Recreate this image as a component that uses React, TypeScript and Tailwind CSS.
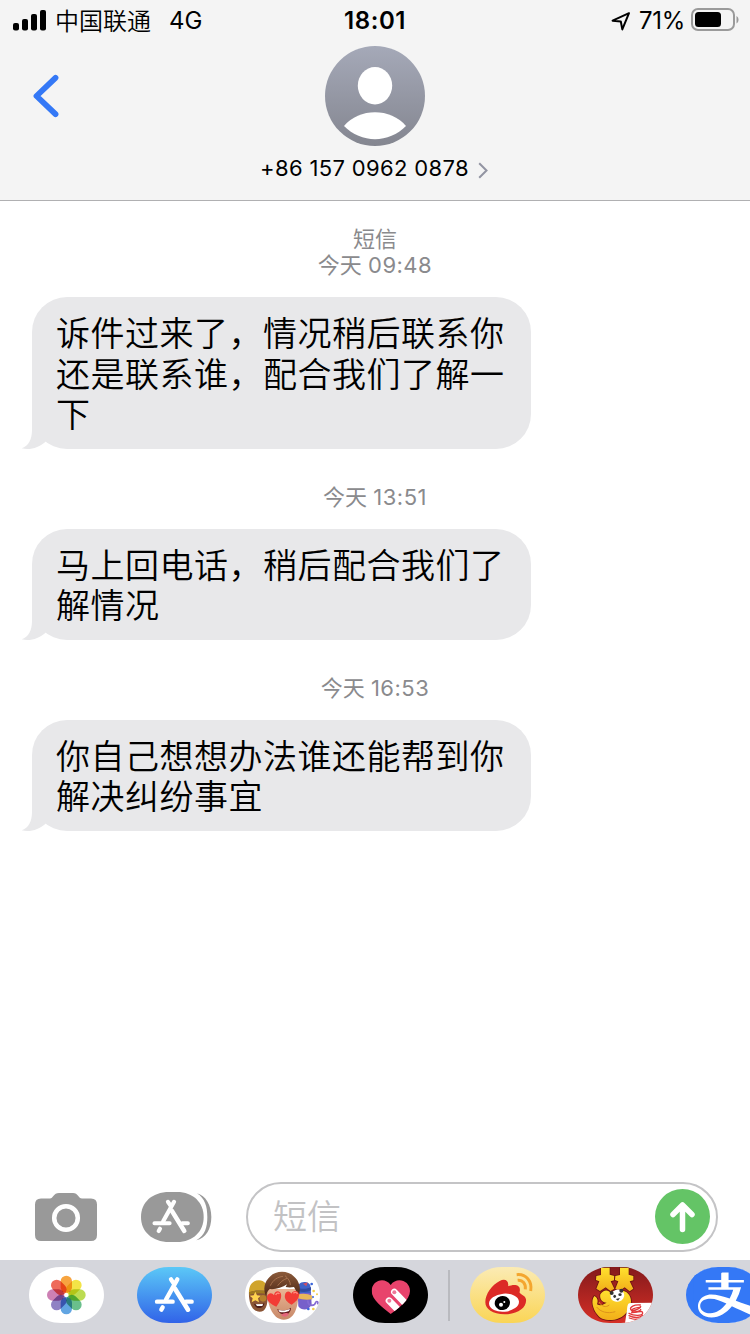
import type { ReactNode } from "react";
import { SiAlipay } from "react-icons/si";

const PILL =
  "M96 0H129C186 0 225 38 225 84S186 168 129 168H96C39 168 0 130 0 84S39 0 96 0Z";

const threads = [
  {
    service: "短信",
    time: "09:48",
    lines: ["诉件过来了，情况稍后联系你", "还是联系谁，配合我们了解一", "下"],
  },
  {
    time: "13:51",
    lines: ["马上回电话，稍后配合我们了", "解情况"],
  },
  {
    time: "16:53",
    lines: ["你自己想想办法谁还能帮到你", "解决纠纷事宜"],
  },
];

const petals = [
  "#f7a440",
  "#f3e447",
  "#bcdc52",
  "#6abf8c",
  "#62a5e2",
  "#9082c4",
  "#cd80b4",
  "#ee6b5b",
];

function StatusBar() {
  return (
    <div className="grid h-10 grid-cols-3 items-center pt-[2px] text-[24px] leading-none">
      <div className="flex items-center pl-[13px]">
        <svg width="34" height="22" viewBox="0 0 34 22" className="-mt-[3px] shrink-0">
          <rect x="0" y="14" width="6" height="7.5" rx="2" />
          <rect x="9" y="10" width="6" height="11.5" rx="2" />
          <rect x="18" y="5" width="6" height="16.5" rx="2" />
          <rect x="27" y="1" width="6" height="20.5" rx="2" />
        </svg>
        <span className="ml-2 mt-px whitespace-nowrap font-[350]">中国联通</span>
        <span className="ml-[18px]">4G</span>
      </div>
      <div className="text-center font-semibold tracking-[0.6px]">18:01</div>
      <div className="flex items-center justify-end pr-[11px]">
        <svg width="20" height="20" viewBox="0 0 20 20" className="-mt-px mr-[8px]">
          <path
            d="M18 2.2L1.6 9.7L9.8 10.5L11.3 18.4Z"
            fill="none"
            stroke="#000"
            strokeWidth="2"
            strokeLinejoin="round"
          />
        </svg>
        <span className="tracking-[-0.3px]">71%</span>
        <svg width="48" height="23" viewBox="0 0 48 23" className="-mt-[3px] ml-[6px]">
          <rect x="1" y="1" width="42" height="21" rx="6" fill="none" stroke="#9a9a9a" strokeWidth="2" />
          <rect x="4" y="4" width="26" height="15" rx="3.5" />
          <path d="M45.5 8V15.5C48.2 14 48.2 9.5 45.5 8Z" fill="#9a9a9a" />
        </svg>
      </div>
    </div>
  );
}

function Header() {
  return (
    <header className="h-[201px] border-b border-[#b0b0b2] bg-[#f4f4f4]">
      <StatusBar />
      <div className="grid grid-cols-3 pt-[6px]">
        <div className="flex h-[100px] items-center pl-[33px]">
          <svg width="27" height="44" viewBox="0 0 27 44" fill="none">
            <path
              d="M22.5 3.8L3.5 22L22.5 40.2"
              stroke="#3478f6"
              strokeWidth="5.8"
              strokeLinecap="round"
              strokeLinejoin="round"
            />
          </svg>
        </div>
        <svg width="100" height="100" viewBox="0 0 100 100" className="mx-auto">
          <defs>
            <linearGradient id="avatar" x1="0" y1="0" x2="0" y2="1">
              <stop offset="0" stopColor="#a5a9b8" />
              <stop offset="1" stopColor="#848690" />
            </linearGradient>
          </defs>
          <circle cx="50" cy="50" r="50" fill="url(#avatar)" />
          <ellipse cx="50" cy="39.7" rx="17.2" ry="18.7" fill="#fff" />
          <path d="M19 80C34 61.5 66 61.5 81 80C64 97.5 36 97.5 19 80Z" fill="#fff" />
        </svg>
      </div>
      <div className="mt-[10px] flex items-center justify-center pr-[2px]">
        <span className="text-[22px] leading-6 tracking-[0.35px]">+86 157 0962 0878</span>
        <svg width="10" height="17" viewBox="0 0 10 17" fill="none" className="ml-[9px] mt-[4px]">
          <path d="M1.2 1.2L8.5 8.5L1.2 15.8" stroke="#9294a2" strokeWidth="2" />
        </svg>
      </div>
    </header>
  );
}

function Bubble({ lines }: { lines: string[] }) {
  return (
    <div className="relative ml-8 w-[499px] rounded-[35px] bg-[#e8e8ea] pb-[13px] pl-6 pt-[17px] text-[34px] font-[350] leading-[40.5px] tracking-[0.5px]">
      {lines.map((line) => (
        <p key={line} className="whitespace-nowrap">
          {line}
        </p>
      ))}
      <svg
        className="absolute -bottom-px -left-3"
        width="30"
        height="49"
        viewBox="60 363 90 147"
        fill="#e8e8ea"
      >
        <path d="M96 368V450C96 478 86 498 65 505C92 511 117 502 137 485L150 450V368Z" />
      </svg>
    </div>
  );
}

function AppGlyph() {
  return (
    <g fill="none" stroke="#fff" strokeLinecap="round" strokeWidth="13">
      <path d="M102 37L110 49" />
      <path d="M121 37L87 98" />
      <path d="M60 104H107M147 104H164" />
      <path d="M114 65L153 128" strokeWidth="14" />
      <path d="M77 121L73 128" />
    </g>
  );
}

function Pill({ id, fill, children }: { id: string; fill: string; children?: ReactNode }) {
  return (
    <svg width="75" height="56" viewBox="0 0 225 168" className="shrink-0">
      <clipPath id={id}>
        <path d={PILL} />
      </clipPath>
      <g clipPath={`url(#${id})`}>
        <rect width="225" height="168" fill={fill} />
        {children}
      </g>
    </svg>
  );
}

function PhotosIcon() {
  return (
    <Pill id="photos" fill="#fff">
      <g transform="translate(112 84)">
        {petals.map((color, i) => (
          <rect
            key={color}
            x="-17"
            y="-58"
            width="34"
            height="52"
            rx="17"
            fill={color}
            transform={`rotate(${i * 45})`}
            className="mix-blend-multiply"
          />
        ))}
      </g>
    </Pill>
  );
}

function StoreIcon() {
  return (
    <Pill id="store" fill="url(#store-bg)">
      <defs>
        <linearGradient id="store-bg" x1="0" y1="0" x2="0" y2="1">
          <stop offset="0" stopColor="#5bc8f7" />
          <stop offset="1" stopColor="#3163e8" />
        </linearGradient>
      </defs>
      <AppGlyph />
    </Pill>
  );
}

function MemojiIcon() {
  return (
    <Pill id="memoji" fill="#fff">
      <defs>
        <linearGradient id="hair" x1="0" y1="0" x2="0" y2="1">
          <stop offset="0" stopColor="#8c5b3b" />
          <stop offset="1" stopColor="#4e2817" />
        </linearGradient>
        <linearGradient id="skin" x1="0" y1="0" x2="0" y2="1">
          <stop offset="0" stopColor="#eab594" />
          <stop offset="1" stopColor="#c78868" />
        </linearGradient>
      </defs>
      {/* left: beanie and star eyes */}
      <path d="M12 70C10 106 20 134 44 134C64 134 70 110 68 70Z" fill="#8a5435" />
      <path d="M12 76C12 52 24 40 42 40C58 40 68 52 70 74C48 68 30 68 12 76Z" fill="#d0a42c" />
      <path d="M12 76C30 68 50 68 70 74V82C50 77 30 78 13 84Z" fill="#a17a20" />
      <path d="M27 110C38 114 50 114 58 108C57 126 34 130 27 110Z" fill="#4c1d19" />
      <path d="M32 112L54 111L52 117H36Z" fill="#fff" />
      <path
        d="M31 74L36 85L48 86L39 94L42 106L31 100L20 106L23 94L14 86L26 85Z"
        fill="#ffd34f"
      />
      <circle cx="54" cy="94" r="10" fill="#b6802d" />
      {/* right: wizard */}
      <path d="M162 52C170 40 194 44 196 56L198 78H160Z" fill="#3f62c8" />
      <path d="M160 62C174 68 188 66 198 60V70C186 76 172 76 160 72Z" fill="#304aa2" />
      <path d="M174 50L188 46L184 58Z" fill="#d04d63" />
      <path d="M158 78H198L200 112C192 132 170 132 160 118Z" fill="#7760ca" />
      <path d="M158 82C174 78 190 80 202 86V97C186 100 170 98 158 94Z" fill="#e8b75b" />
      <path
        d="M188 100C190 122 210 116 212 106C216 100 222 106 217 112"
        fill="none"
        stroke="#856bd2"
        strokeWidth="5"
      />
      <g fill="#3c66db">
        <circle cx="200" cy="51" r="4" />
        <circle cx="190" cy="126" r="4" />
        <circle cx="204" cy="90" r="3" />
      </g>
      <g fill="#f4cf4c">
        <circle cx="206" cy="72" r="4" />
        <circle cx="205" cy="126" r="4" />
        <circle cx="216" cy="82" r="3" />
      </g>
      {/* centre: heart eyes */}
      <path d="M67 66C64 104 80 158 116 158C152 158 162 112 160 66Z" fill="url(#skin)" />
      <path
        d="M63 86C54 70 57 44 76 28C92 10 130 10 146 28C164 42 168 66 162 84C156 78 152 70 147 60C138 62 130 62 122 60L126 52C112 62 90 68 74 66C68 72 65 78 63 86Z"
        fill="url(#hair)"
      />
      <path
        d="M76 56C84 38 98 30 114 28M98 56C106 46 114 38 126 34M136 54C136 44 130 34 120 26"
        fill="none"
        stroke="#a87350"
        strokeWidth="3"
      />
      <path d="M96 127C110 132 128 130 138 122C138 144 110 154 96 127Z" fill="#671e20" />
      <path d="M100 129C112 132 126 130 135 125L132 132C120 137 110 137 103 134Z" fill="#fff" />
      <path d="M108 144C116 136 128 136 132 142C126 150 116 152 108 144Z" fill="#e5657b" />
      <path
        d="M94 119C78 112 64 101 66 89C68 77 82 75 87 85C88 71 104 68 108 81C111 94 102 108 94 119Z"
        fill="#f23c35"
      />
      <path
        d="M140 113C126 106 117 95 120 83C123 71 134 70 139 80C144 68 161 70 162 82C163 97 150 106 140 113Z"
        fill="#f23c35"
      />
      <path d="M92 84C95 77 101 77 103 81M145 79C150 74 156 76 157 81" stroke="#ff8a7d" strokeWidth="4" fill="none" />
    </Pill>
  );
}

function TouchIcon() {
  return (
    <Pill id="touch" fill="#000">
      <clipPath id="heart">
        <path d="M113 141C90 122 56 99 56 72C56 40 95 28 113 54C131 28 171 40 171 72C171 99 137 124 113 141Z" />
      </clipPath>
      <g clipPath="url(#heart)">
        <rect width="225" height="168" fill="#e8436c" />
        <g stroke="#fff" strokeLinecap="round" strokeWidth="20">
          <path d="M124 75L170 123" />
          <path d="M108 101L152 146" />
        </g>
        <path d="M116 89L158 132" stroke="#e8436c" strokeWidth="3" />
      </g>
      <circle cx="124" cy="76" r="6" fill="#ee7898" />
      <circle cx="109" cy="101" r="6" fill="#ee7898" />
    </Pill>
  );
}

function WeiboIcon() {
  return (
    <Pill id="weibo" fill="url(#weibo-bg)">
      <defs>
        <linearGradient id="weibo-bg" x1="0" y1="0" x2="0" y2="1">
          <stop offset="0" stopColor="#fbebb4" />
          <stop offset="1" stopColor="#fad556" />
        </linearGradient>
      </defs>
      <path
        d="M46 106C46 80 66 54 89 42C105 33 118 42 114 58C132 50 154 52 149 74C146 82 165 82 168 97C171 122 143 142 104 142C68 142 46 126 46 106Z"
        fill="#dc2a26"
      />
      <ellipse cx="102" cy="107" rx="45" ry="27" fill="#fff" transform="rotate(-5 102 107)" />
      <ellipse cx="97" cy="108" rx="23" ry="21" transform="rotate(-15 97 108)" />
      <circle cx="93" cy="113" r="6" fill="#fff" />
      <circle cx="103" cy="105" r="3" fill="#fff" />
      <g fill="none" stroke="#f4a62f" strokeWidth="9">
        <path d="M140 23C168 20 187 42 182 72" />
        <path d="M143 40C158 38 168 50 166 67" />
      </g>
    </Pill>
  );
}

function GameIcon() {
  return (
    <Pill id="game" fill="url(#game-bg)">
      <defs>
        <linearGradient id="game-bg" x1="0" y1="0" x2="0" y2="1">
          <stop offset="0" stopColor="#841a1c" />
          <stop offset="1" stopColor="#d62f26" />
        </linearGradient>
        <linearGradient id="gold" x1="0" y1="0" x2="0" y2="1">
          <stop offset="0" stopColor="#ffe12e" />
          <stop offset="1" stopColor="#f2ae19" />
        </linearGradient>
      </defs>
      <g fill="url(#gold)" stroke="#6f1512" strokeWidth="5" strokeLinejoin="round" paintOrder="stroke">
        <path d="M69 2H95V23L109 27L108 40L98 43L109 65L97 72L83 61L66 72L55 65L64 43L54 39L55 27L69 24Z" />
        <path d="M126 2H152V23L166 27L166 40L155 43L166 65L155 73L140 61L124 72L112 65L121 43L111 39L112 27L126 24Z" />
        <path d="M67 82C76 67 91 67 98 78C112 67 139 66 151 81C174 108 145 157 102 159C80 160 65 154 59 144C44 126 38 101 49 87C59 92 61 102 57 112C70 120 78 110 86 107C73 107 64 96 67 82Z" />
      </g>
      <path
        d="M56 120C67 135 89 141 112 134M63 105C72 120 84 122 94 114"
        fill="none"
        stroke="#dc931c"
        strokeWidth="3"
      />
      <ellipse cx="118" cy="86" rx="21" ry="18" fill="#fff" transform="rotate(-16 118 86)" />
      <g fill="#333">
        <circle cx="101" cy="78" r="6" />
        <circle cx="130" cy="71" r="6" />
        <ellipse cx="110" cy="88" rx="4" ry="5" />
        <ellipse cx="126" cy="83" rx="5" ry="4" />
        <path d="M113 96L126 93L120 101Z" />
      </g>
      <path d="M225 107L158 108C148 108 148 118 147 130L141 168H225Z" fill="#fff" />
      <g fill="none" stroke="#e13739" strokeWidth="4" strokeLinecap="round">
        <path d="M187 114C168 112 155 120 158 127C162 135 184 127 188 119" />
        <path d="M187 121C164 122 155 131 165 134C176 136 190 130 188 127" />
        <path d="M161 137C178 138 194 128 194 138C194 147 167 147 153 139" />
        <path d="M153 146C169 154 186 153 194 145M154 153C167 158 180 159 190 153" />
      </g>
    </Pill>
  );
}

function AlipayIcon() {
  return (
    <div className="h-14 w-[75px] shrink-0 overflow-hidden rounded-[32px/28px] bg-[#3478f6]">
      <div className="-mt-[3px] ml-[7px] size-16 bg-white bg-linear-to-r from-[#3478f6] from-[4px] to-transparent to-[4px]">
        <SiAlipay size={64} color="#3478f6" />
      </div>
    </div>
  );
}

function Composer() {
  return (
    <div className="flex h-[78px] items-start pl-[35px]">
      <svg width="62" height="49" viewBox="0 0 62 49" className="mt-[11px]">
        <path
          d="M6 5.5H15C18 5.5 18.5 0 24 0H38C43 0 43.5 5.5 47 5.5H56Q62 5.5 62 11.5V42Q62 48 56 48H6Q0 48 0 42V11.5Q0 5.5 6 5.5Z"
          fill="#999"
        />
        <circle cx="31" cy="25" r="11.8" fill="none" stroke="#fff" strokeWidth="4.5" />
      </svg>
      <svg width="71" height="50" viewBox="0 0 213 150" className="ml-11 mt-[10px]">
        <path
          d="M85 0H108C157 0 188 32 188 75S157 150 108 150H85C32 150 0 118 0 75S32 0 85 0Z"
          fill="#999"
        />
        <path d="M168 4C192 20 199 44 199 75S192 130 166 145C194 139 211 111 211 75S194 11 168 4Z" fill="#999" />
        <g transform="translate(-17 -6) scale(.96)">
          <AppGlyph />
        </g>
      </svg>
      <div className="ml-[34px] flex h-[70px] w-[472px] items-center justify-between rounded-full border-2 border-[#c4c4c6] pl-[25px] pr-[6px]">
        <span className="text-[34px] font-[350] leading-10 text-[#c2c2c4]">短信</span>
        <svg width="55" height="55" viewBox="0 0 55 55" className="-mt-px">
          <circle cx="27.5" cy="27.5" r="27.5" fill="#64c466" />
          <path
            d="M27.5 40.5V17M18 25.5L27.5 16L37 25.5"
            fill="none"
            stroke="#fff"
            strokeWidth="5.5"
            strokeLinecap="round"
            strokeLinejoin="round"
          />
        </svg>
      </div>
    </div>
  );
}

function AppDrawer() {
  return (
    <div className="flex h-[74px] items-start overflow-hidden bg-[#d5d6dc] pl-[28.5px] pt-[6.5px]">
      <div className="flex gap-[33px]">
        <PhotosIcon />
        <StoreIcon />
        <MemojiIcon />
        <TouchIcon />
      </div>
      <div className="ml-[20.5px] mr-5 mt-[3px] h-[51px] w-[2px] shrink-0 bg-[#b9babf]" />
      <div className="flex gap-[33px]">
        <WeiboIcon />
        <GameIcon />
        <AlipayIcon />
      </div>
    </div>
  );
}

export default function App() {
  return (
    <div className="flex h-[1334px] w-[750px] flex-col overflow-hidden bg-white font-['Inter','Noto_Sans_CJK_SC',sans-serif] text-black">
      <Header />
      <main className="flex-1 pt-[25px]">
        {threads.map(({ service, time, lines }) => (
          <section key={time} className="mb-[35px]">
            <div className="mb-[19px] text-center text-[22px] leading-[26px] text-[#8a8a8d]">
              {service && <div>{service}</div>}
              <div>
                今天 <span className="tracking-[0.5px]">{time}</span>
              </div>
            </div>
            <Bubble lines={lines} />
          </section>
        ))}
      </main>
      <Composer />
      <AppDrawer />
    </div>
  );
}
